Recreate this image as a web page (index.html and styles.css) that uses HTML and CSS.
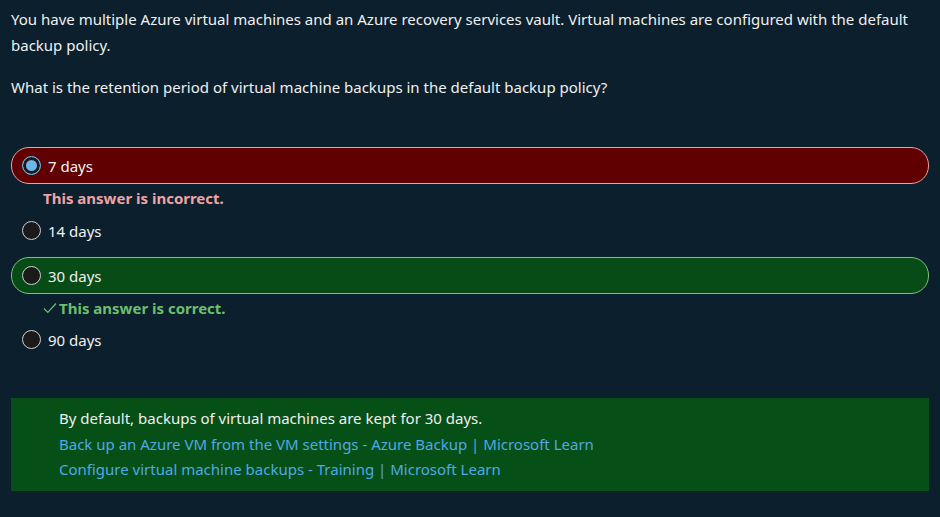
FILE: index.html
```html
<!DOCTYPE html>
<html lang="en">
<head>
<meta charset="utf-8">
<title>Quiz</title>
<link rel="stylesheet" href="styles.css">
</head>
<body>
<main class="quiz">
  <p class="stem">You have multiple Azure virtual machines and an Azure recovery services vault. Virtual machines are configured with the default backup policy.</p>
  <p class="stem">What is the retention period of virtual machine backups in the default backup policy?</p>

  <div class="options">
    <div class="item">
      <div class="option wrong"><span class="radio checked"></span><span class="label">7 days</span></div>
      <div class="feedback bad">This answer is incorrect.</div>
    </div>
    <div class="item">
      <div class="option"><span class="radio"></span><span class="label">14 days</span></div>
    </div>
    <div class="item">
      <div class="option right"><span class="radio"></span><span class="label">30 days</span></div>
      <div class="feedback good"><svg class="check" width="14" height="12" viewBox="0 0 14 12"><path d="M1 6.5 L4.8 10.3 L13 1.5" fill="none" stroke="currentColor" stroke-width="1.2"/></svg>This answer is correct.</div>
    </div>
    <div class="item">
      <div class="option"><span class="radio"></span><span class="label">90 days</span></div>
    </div>
  </div>

  <div class="explain">
    <div>By default, backups of virtual machines are kept for 30 days.</div>
    <div><a href="#">Back up an Azure VM from the VM settings - Azure Backup | Microsoft Learn</a></div>
    <div><a href="#">Configure virtual machine backups - Training | Microsoft Learn</a></div>
  </div>
</main>
</body>
</html>
```
FILE: styles.css
```css
html, body {
  margin: 0;
  background: #0b1f2d;
}
body {
  font-family: "Noto Sans", "Open Sans", sans-serif;
  font-size: 15px;
  color: #f0f0f0;
}
.quiz {
  padding: 6px 11px 0 11px;
}
.stem {
  margin: 0 0 16px 0;
  line-height: 26px;
}
.options {
  margin-top: 47px;
  display: flex;
  flex-direction: column;
  gap: 8px;
}
.option {
  display: flex;
  align-items: center;
  gap: 7px;
  height: 35px;
  padding-left: 10px;
  border: 1px solid transparent;
  border-radius: 18px;
}
.option.wrong {
  background: #600000;
  border-color: #e8a4a4;
}
.option.right {
  background: #074c16;
  border-color: #7cc47c;
}
.radio {
  box-sizing: border-box;
  width: 19px;
  height: 19px;
  border-radius: 50%;
  background: #1b1a1a;
  border: 1.5px solid #cfcfcf;
  flex: none;
}
.radio.checked {
  background: #6db6ea;
  border-color: #6db6ea;
  box-shadow: inset 0 0 0 3px #1b1a1a;
}
.label {
  line-height: 20px;
}
.feedback {
  display: flex;
  align-items: center;
  padding: 4px 0 0 32px;
  line-height: 20px;
  margin-bottom: -4px;
  font-weight: 700;
}
.feedback.bad { color: #f0a3a3; }
.feedback.good { color: #6cbf6c; margin-bottom: -5px; }
.check { margin-right: 2px; }
.explain {
  margin-top: 40px;
  background: #064f16;
  padding: 8px 48px 8px 48px;
  line-height: 25.5px;
}
.explain a {
  color: #4fa9e6;
  text-decoration: none;
}
```
